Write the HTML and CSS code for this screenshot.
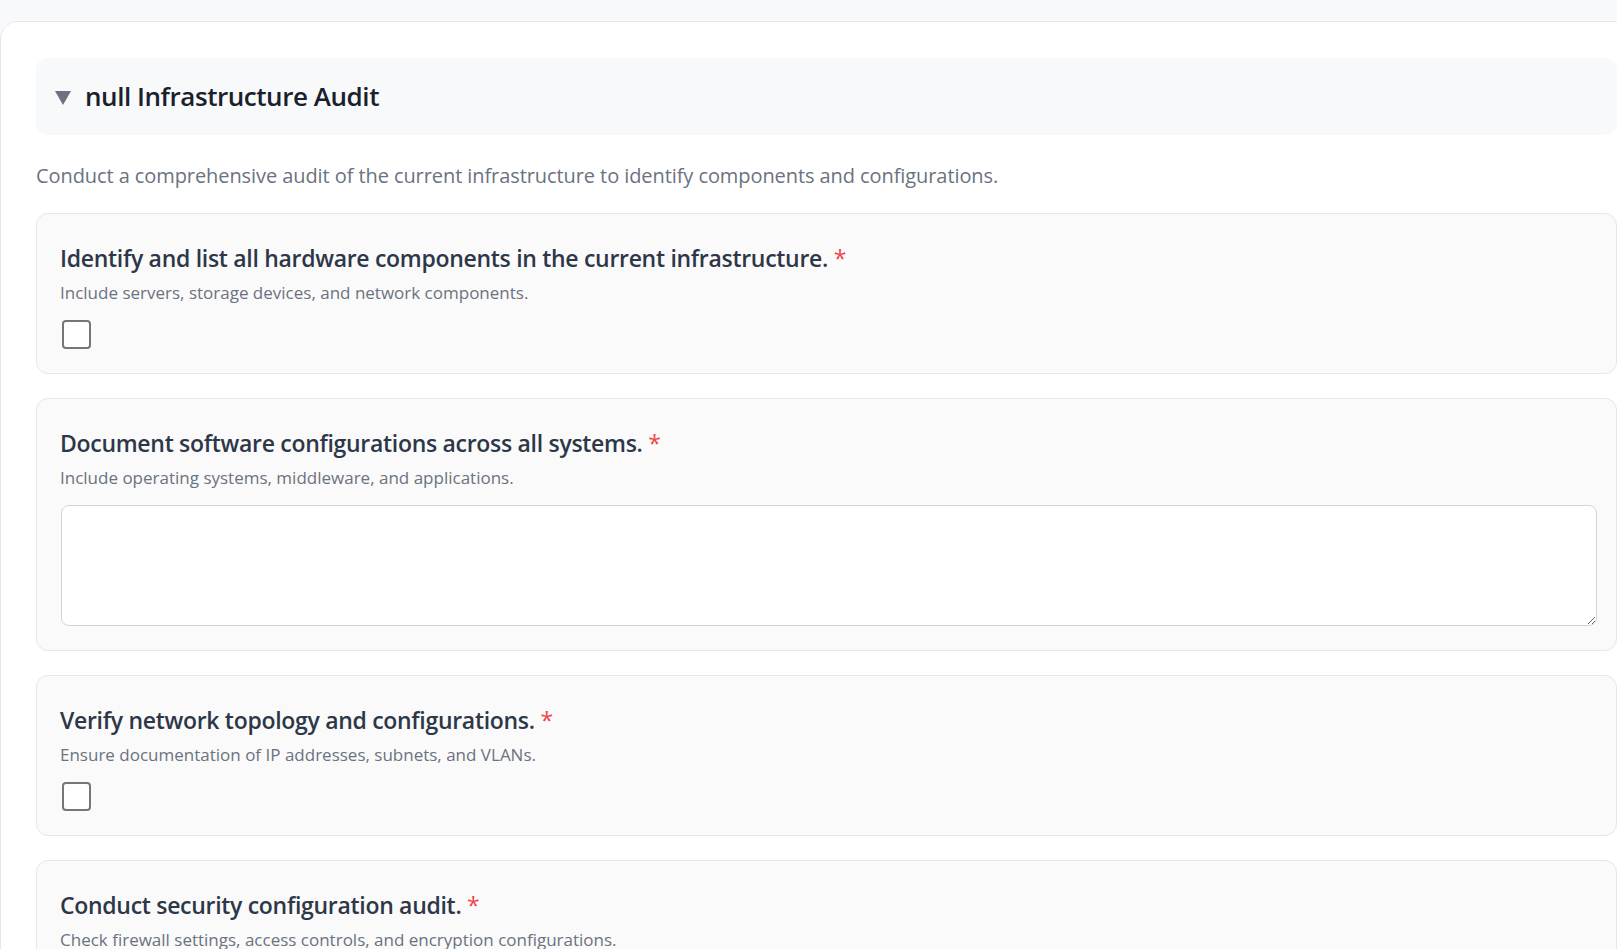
FILE: index.html
```html
<!DOCTYPE html>
<html lang="en">
<head>
<meta charset="utf-8">
<title>Infrastructure Audit</title>
<link rel="stylesheet" href="styles.css">
</head>
<body>
<div class="page">
  <div class="card">
    <div class="section-header">
      <svg class="caret" width="16" height="14" viewBox="0 0 16 14"><polygon points="0,0 16,0 8,14" fill="#6b7280"/></svg>
      <h2 class="section-title">null Infrastructure Audit</h2>
    </div>
    <p class="section-desc">Conduct a comprehensive audit of the current infrastructure to identify components and configurations.</p>

    <div class="item">
      <h3 class="item-title">Identify and list all hardware components in the current infrastructure. <span class="req">*</span></h3>
      <p class="item-desc">Include servers, storage devices, and network components.</p>
      <input class="check" type="checkbox">
    </div>

    <div class="item">
      <h3 class="item-title">Document software configurations across all systems. <span class="req">*</span></h3>
      <p class="item-desc">Include operating systems, middleware, and applications.</p>
      <textarea class="text"></textarea>
    </div>

    <div class="item">
      <h3 class="item-title">Verify network topology and configurations. <span class="req">*</span></h3>
      <p class="item-desc">Ensure documentation of IP addresses, subnets, and VLANs.</p>
      <input class="check" type="checkbox">
    </div>

    <div class="item">
      <h3 class="item-title">Conduct security configuration audit. <span class="req">*</span></h3>
      <p class="item-desc">Check firewall settings, access controls, and encryption configurations.</p>
      <input class="check" type="checkbox">
    </div>
  </div>
</div>
</body>
</html>
```

FILE: styles.css
```css
* { box-sizing: border-box; }

html, body {
  margin: 0;
  padding: 0;
  overflow: hidden;
}

body {
  background: #f8f9fa;
  font-family: "Segoe UI", "Open Sans", "Noto Sans", sans-serif;
  color: #2d3748;
}

.page {
  padding-top: 21px;
}

.card {
  width: 1653px;
  background: #ffffff;
  border: 1px solid #e5e7eb;
  border-radius: 18px 18px 0 0;
  padding: 36px 35px 40px 35px;
}

.section-header {
  display: flex;
  align-items: center;
  gap: 14px;
  height: 77px;
  padding: 0 19px;
  background: #f8f9fa;
  border-radius: 12px;
}

.caret {
  flex: none;
  margin-top: 2px;
}

.section-title {
  margin: 0;
  font-size: 26px;
  font-weight: 600;
  letter-spacing: -0.45px;
  color: #1a202c;
  line-height: 1.3;
}

.section-desc {
  margin: 26px 0 22px 0;
  font-size: 20px;
  line-height: 30px;
  letter-spacing: -0.08px;
  color: #6b7280;
}

.item {
  background: #fafafa;
  border: 1px solid #e5e7eb;
  border-radius: 12px;
  padding: 26px 20px 24px 23px;
  margin-bottom: 24px;
}

.item-title {
  margin: 0 0 3px 0;
  font-size: 23px;
  font-weight: 600;
  line-height: 36px;
  letter-spacing: -0.3px;
  color: #2d3748;
}

.req {
  color: #ef4444;
  font-weight: 400;
}

.item-desc {
  margin: 0 0 14px 0;
  font-size: 17px;
  line-height: 27px;
  color: #6b7280;
}

.check {
  appearance: none;
  -webkit-appearance: none;
  display: block;
  width: 29px;
  height: 29px;
  margin: 0 0 0 2px;
  background: #ffffff;
  border: 2px solid #767676;
  border-radius: 4px;
}

.text {
  display: block;
  width: 100%;
  height: 121px;
  margin: 0 0 0 1px;
  background: #ffffff;
  border: 1px solid #d1d5db;
  border-radius: 8px;
  resize: vertical;
  font-family: inherit;
}
```
